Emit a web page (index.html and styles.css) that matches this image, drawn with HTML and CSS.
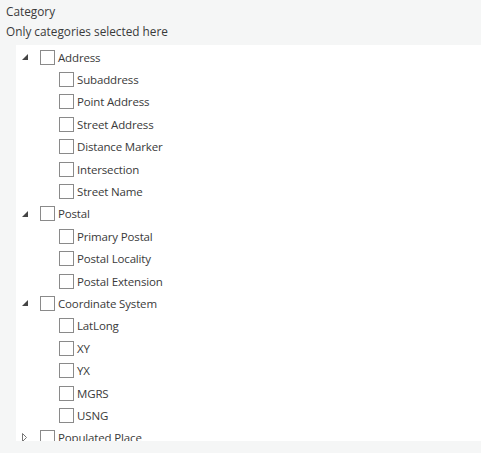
FILE: index.html
```html
<!DOCTYPE html>
<html>
<head>
<meta charset="utf-8">
<link rel="stylesheet" href="styles.css">
</head>
<body>
<div class="page">
  <div class="label">Category</div>
  <div class="label sub">Only categories selected here</div>
  <div class="panel">
    <ul class="tree">
      <li class="row l0"><span class="tog"><svg width="6" height="6" viewBox="0 0 6 6"><path d="M6 0L6 6L0 6Z" fill="#444"/></svg></span><span class="cb"></span><span class="txt">Address</span></li>
      <li class="row l1"><span class="cb"></span><span class="txt">Subaddress</span></li>
      <li class="row l1"><span class="cb"></span><span class="txt">Point Address</span></li>
      <li class="row l1"><span class="cb"></span><span class="txt">Street Address</span></li>
      <li class="row l1"><span class="cb"></span><span class="txt">Distance Marker</span></li>
      <li class="row l1"><span class="cb"></span><span class="txt">Intersection</span></li>
      <li class="row l1"><span class="cb"></span><span class="txt">Street Name</span></li>
      <li class="row l0"><span class="tog"><svg width="6" height="6" viewBox="0 0 6 6"><path d="M6 0L6 6L0 6Z" fill="#444"/></svg></span><span class="cb"></span><span class="txt">Postal</span></li>
      <li class="row l1"><span class="cb"></span><span class="txt">Primary Postal</span></li>
      <li class="row l1"><span class="cb"></span><span class="txt">Postal Locality</span></li>
      <li class="row l1"><span class="cb"></span><span class="txt">Postal Extension</span></li>
      <li class="row l0"><span class="tog"><svg width="6" height="6" viewBox="0 0 6 6"><path d="M6 0L6 6L0 6Z" fill="#444"/></svg></span><span class="cb"></span><span class="txt">Coordinate System</span></li>
      <li class="row l1"><span class="cb"></span><span class="txt">LatLong</span></li>
      <li class="row l1"><span class="cb"></span><span class="txt">XY</span></li>
      <li class="row l1"><span class="cb"></span><span class="txt">YX</span></li>
      <li class="row l1"><span class="cb"></span><span class="txt">MGRS</span></li>
      <li class="row l1"><span class="cb"></span><span class="txt">USNG</span></li>
      <li class="row l0"><span class="tog"><svg width="6" height="9" viewBox="0 0 6 9"><path d="M0.5 0.5L4.5 4.5L0.5 8.5Z" fill="none" stroke="#777" stroke-width="1"/></svg></span><span class="cb"></span><span class="txt">Populated Place</span></li>
    </ul>
  </div>
</div>
</body>
</html>
```

FILE: styles.css
```css
html, body {
  margin: 0;
  padding: 0;
  background: #f5f6f6;
}
.page {
  width: 481px;
  height: 453px;
  font-family: "Open Sans", "Noto Sans", sans-serif;
  font-size: 11.5px;
  letter-spacing: -0.15px;
  color: #3a3a3a;
  overflow: hidden;
  padding-top: 1px;
  box-sizing: border-box;
}
.label {
  padding-left: 6px;
  height: 20px;
  line-height: 20px;
  font-size: 11.8px;
  letter-spacing: 0;
}
.panel {
  margin-top: 4px;
  margin-left: 16px;
  background: #fff;
  height: 396px;
  overflow: hidden;
}
.tree {
  list-style: none;
  margin: 0;
  padding: 1px 0 0 0;
}
.row {
  display: flex;
  align-items: center;
  height: 22.4px;
}
.l0 { padding-left: 6px; }
.l1 { padding-left: 43px; }
.tog {
  width: 18px;
  display: flex;
  align-items: center;
  justify-content: flex-start;
}
.cb {
  width: 13px;
  height: 13px;
  border: 1px solid #8a8a8a;
  background: #fff;
  flex: none;
}
.txt {
  margin-left: 3px;
  white-space: nowrap;
}
```
